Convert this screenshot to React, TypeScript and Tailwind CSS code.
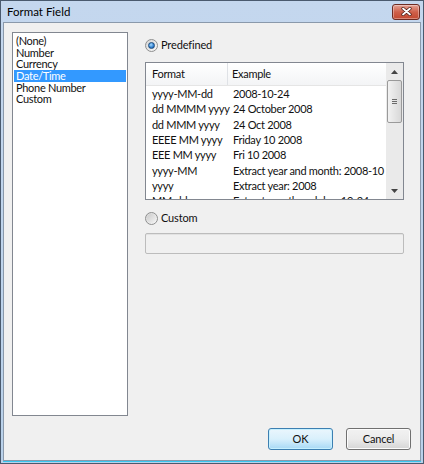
import React from "react";

const categories = ["(None)", "Number", "Currency", "Date/Time", "Phone Number", "Custom"];

const formats: [string, string][] = [
  ["yyyy-MM-dd", "2008-10-24"],
  ["dd MMMM yyyy", "24 October 2008"],
  ["dd MMM yyyy", "24 Oct 2008"],
  ["EEEE MM yyyy", "Friday 10 2008"],
  ["EEE MM yyyy", "Fri 10 2008"],
  ["yyyy-MM", "Extract year and month: 2008-10"],
  ["yyyy", "Extract year: 2008"],
  ["MM-dd", "Extract month and day: 10-24"],
];

function Radio({ checked }: { checked: boolean }) {
  return (
    <span className="relative flex h-[13px] w-[13px] shrink-0 items-center justify-center rounded-full border border-[#8e8f8f] bg-gradient-to-br from-[#d6d6d6] to-[#f8f8f8]">
      {checked ? (
        <span className="h-[7px] w-[7px] rounded-full border border-[#1b4b7e] bg-[radial-gradient(circle_at_40%_35%,#a8dcff,#2f7fd0_60%,#194f8c)]" />
      ) : (
        <span className="h-[9px] w-[9px] rounded-full bg-gradient-to-br from-[#cbcbcb] to-[#f4f4f4]" />
      )}
    </span>
  );
}

export default function App() {
  return (
    <div
      className="flex h-[464px] w-[424px] flex-col border border-[#4a5a6e] bg-gradient-to-b from-[#c4d7ee] to-[#b9d1ea] text-[11px] tracking-[-0.15px] text-[#111]"
      style={{ fontFamily: '"Segoe UI", Lato, sans-serif' }}
    >
      {/* title bar */}
      <div className="flex h-[21px] shrink-0 items-center justify-between pl-[6px] pr-[3px]">
        <span className="text-[11.5px] tracking-normal text-black">Format Field</span>
        <span className="flex h-[16px] w-[28px] items-center justify-center rounded-[3px] border border-[#6d2b22] bg-gradient-to-b from-[#e3a194] via-[#cf604a] to-[#c2482f] shadow-[inset_0_0_0_1px_rgba(255,255,255,0.35)]">
          <svg width="11" height="9" viewBox="0 0 11 9">
            <path d="M2 1.5 L9 7.5 M9 1.5 L2 7.5" stroke="#4a1a12" strokeWidth="3.2" strokeLinecap="round" />
            <path d="M2 1.5 L9 7.5 M9 1.5 L2 7.5" stroke="#ffffff" strokeWidth="1.8" strokeLinecap="round" />
          </svg>
        </span>
      </div>

      {/* client */}
      <div className="mx-[2px] mb-[2px] flex flex-1 flex-col border border-[#8a99ab] bg-[#f0f0f0] pl-[8px] pr-[8px] pt-[9px] shadow-[0_1px_0_0_#38c6ef]">
        <div className="flex gap-[17px]">
          {/* category list */}
          <div className="flex h-[384px] w-[116px] flex-col border border-[#828790] bg-white px-[1px] pt-[2px] tracking-[-0.3px]">
            {categories.map((c) => (
              <div
                key={c}
                className={
                  c === "Date/Time"
                    ? "flex h-[11.7px] items-center bg-[#3399ff] pl-[2px] leading-[11.7px] text-white"
                    : "flex h-[11.7px] items-center pl-[2px] leading-[11.7px]"
                }
              >
                {c}
              </div>
            ))}
          </div>

          {/* right column */}
          <div className="flex w-[259px] flex-col">
            <div className="mt-[5px] flex h-[16px] items-center gap-[3px]">
              <Radio checked />
              <span>Predefined</span>
            </div>

            <div className="mt-[9px] flex h-[138px] border border-[#828790] bg-white">
              <div className="flex min-w-0 flex-1 flex-col overflow-hidden tracking-[-0.3px]">
                <div className="flex h-[23px] shrink-0 items-center border-b border-[#e5e5e5] bg-gradient-to-b from-white to-[#f3f4f6]">
                  <div className="flex h-full w-[82px] items-center border-r border-[#dfe2e6] pl-[6px]">Format</div>
                  <div className="pl-[4px]">Example</div>
                </div>
                {formats.map(([f, e]) => (
                  <div key={f} className="flex h-[15.33px] shrink-0 items-center whitespace-nowrap leading-[15px]">
                    <div className="w-[83px] shrink-0 pl-[6px]">{f}</div>
                    <div className="pl-[4px]">{e}</div>
                  </div>
                ))}
              </div>

              {/* scrollbar */}
              <div className="flex w-[17px] shrink-0 flex-col bg-[#eaeaea]">
                <div className="flex h-[17px] items-center justify-center">
                  <svg width="7" height="4" viewBox="0 0 7 4">
                    <path d="M0 4 L3.5 0 L7 4 Z" fill="#444" />
                  </svg>
                </div>
                <div className="mx-[1px] flex h-[43px] items-center justify-center rounded-[2px] border border-[#9a9a9a] bg-gradient-to-r from-[#f2f2f2] to-[#d8d8d8]">
                  <div className="flex flex-col gap-[1px]">
                    <div className="h-px w-[5px] bg-[#6a6a6a]" />
                    <div className="h-px w-[5px] bg-[#6a6a6a]" />
                    <div className="h-px w-[5px] bg-[#6a6a6a]" />
                  </div>
                </div>
                <div className="flex-1" />
                <div className="flex h-[17px] items-center justify-center">
                  <svg width="7" height="4" viewBox="0 0 7 4">
                    <path d="M0 0 L3.5 4 L7 0 Z" fill="#444" />
                  </svg>
                </div>
              </div>
            </div>

            <div className="mt-[10px] flex h-[16px] items-center gap-[3px]">
              <Radio checked={false} />
              <span>Custom</span>
            </div>

            <div className="mt-[7px] h-[21px] rounded-[2px] border border-[#bcbcbc] bg-[#f0f0f0] shadow-[inset_0_1px_0_0_#e2e2e2]" />
          </div>
        </div>

        {/* buttons */}
        <div className="mt-[12px] flex justify-end gap-[13px] pr-[1px]">
          <button
            type="button"
            className="h-[22px] w-[65px] rounded-[3px] border border-[#3c7fb1] bg-gradient-to-b from-[#eaf6fd] via-[#d9f0fc] to-[#a7d9f5] text-[11px] shadow-[inset_0_0_0_1px_#c6f0ff]"
          >
            OK
          </button>
          <button
            type="button"
            className="h-[22px] w-[65px] rounded-[3px] border border-[#707070] bg-gradient-to-b from-[#f2f2f2] via-[#ebebeb] to-[#d5d5d5] text-[11px] shadow-[inset_0_0_0_1px_#fcfcfc]"
          >
            Cancel
          </button>
        </div>
      </div>
    </div>
  );
}
